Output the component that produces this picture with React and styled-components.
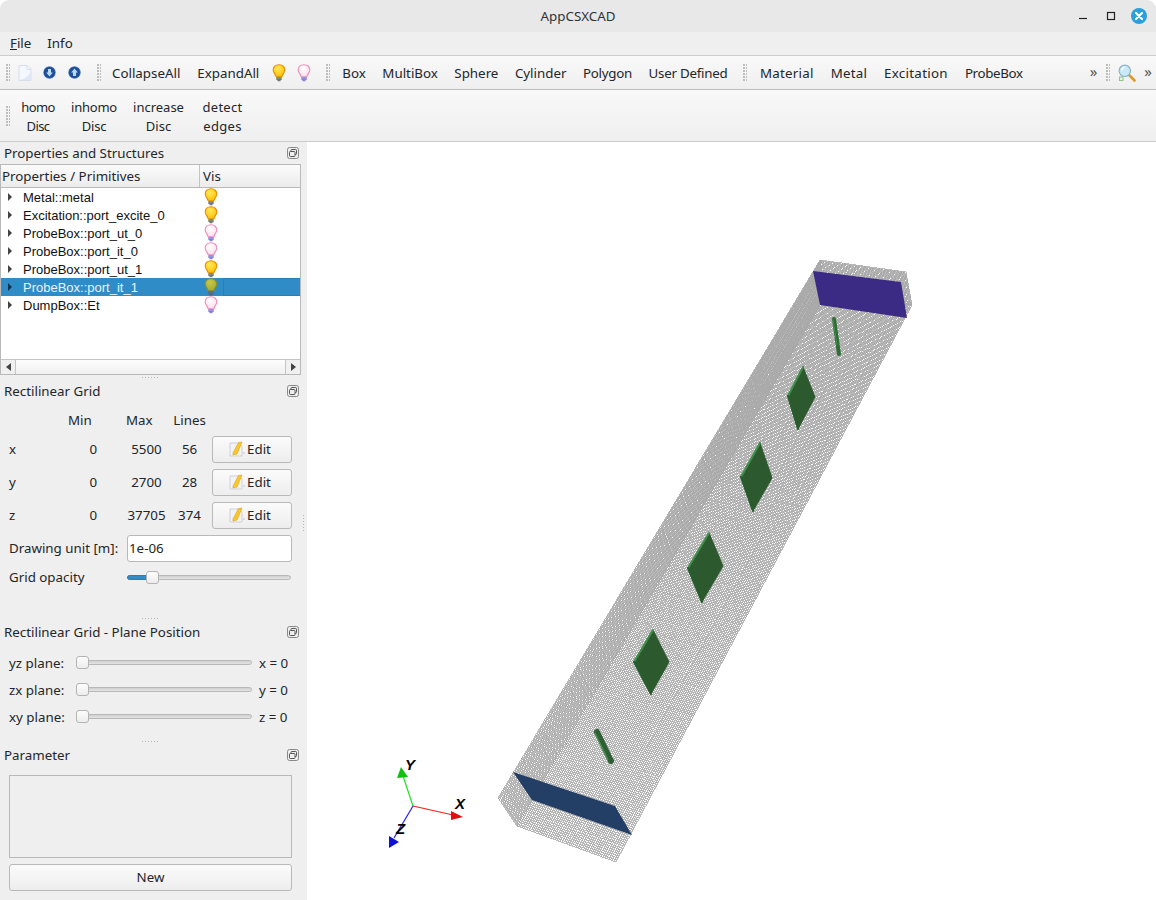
import React from "react";
import styled, { createGlobalStyle } from "styled-components";

const Global = createGlobalStyle`
  html, body { margin: 0; padding: 0; background: #fff; }
  body { width: 1156px; height: 900px; overflow: hidden; font-family: "Noto Sans", sans-serif; font-size: 13.33px; color: #232629; }
  * { box-sizing: border-box; }
`;

const Window = styled.div`display:flex;flex-direction:column;width:1156px;height:900px;`;
const TitleBar = styled.header`
  height:32px;flex:none;display:flex;align-items:center;justify-content:center;position:relative;
  background:#e8e8e8;border-radius:9px 9px 0 0;color:#2e3436;
`;
const WindowControls = styled.div`position:absolute;right:8px;top:0;height:32px;display:flex;align-items:center;gap:14px;`;
const MinIcon = styled.svg`margin-right:4px;`;
const MenuBar = styled.nav`height:24px;flex:none;display:flex;align-items:center;gap:16px;padding:0 10px 2px;background:#efefef;border-bottom:1px solid #cdcdcd;`;
const Mnemonic = styled.span`text-decoration:underline;`;
const ToolBar = styled.div`
  flex:none;display:flex;align-items:center;height:${p=>p.$h}px;padding-left:6px;
  background:linear-gradient(#f9f9f9,#efefef);border-bottom:1px solid ${p=>p.$line};
`;
const Grip = styled.i`
  flex:none;display:block;width:4px;height:${p=>p.$h||18}px;margin:${p=>p.$m||"0 6.5px 0 0"};
  background-image:radial-gradient(circle at 1px 1px,#bdbdbd .8px,transparent 1px);background-size:3px 3px;
`;
const ToolGroup = styled.div`display:flex;align-items:center;gap:${p=>p.$gap||17}px;margin-left:${p=>p.$ml||0}px;`;
const IconSlot = styled.span`display:flex;align-items:center;justify-content:center;width:16px;height:20px;flex:none;`;
const ToolText = styled.span`white-space:nowrap;letter-spacing:${p=>p.$ls||0}px;`;
const Stacked = styled.span`
  display:flex;flex-direction:column;align-items:center;line-height:19px;width:${p=>p.$w}px;padding-top:2px;
  font-size:13px;letter-spacing:${p=>p.$ls}px;white-space:nowrap;
`;
const Overflow = styled.span`font-size:15px;color:#555;line-height:1;margin:-3px ${p=>p.$mr||0}px 0 ${p=>p.$ml||0}px;`;
const RightTools = styled.div`margin-left:auto;display:flex;align-items:center;`;

const Main = styled.main`flex:1;display:flex;min-height:0;`;
const Dock = styled.aside`width:307px;flex:none;background:#efefef;display:flex;flex-direction:column;position:relative;`;
const DockTitle = styled.div`height:22px;flex:none;display:flex;align-items:center;justify-content:space-between;padding:0 8px 0 4px;`;
const Splitter = styled.div`
  height:5px;flex:none;display:flex;justify-content:center;align-items:center;padding-right:6px;
  &::after{content:"";width:17px;height:1px;background-image:radial-gradient(circle at .5px .5px,#b5b5b5 .7px,transparent .8px);background-size:3px 1px;}
`;
const VSplit = styled.i`
  position:absolute;left:303px;top:373px;width:1px;height:17px;
  background-image:radial-gradient(circle at .5px .5px,#b5b5b5 .7px,transparent .8px);background-size:1px 3px;
`;
const Tree = styled.div`width:301px;height:211px;flex:none;border:1px solid #b9b9b9;background:#fff;display:flex;flex-direction:column;`;
const TreeHead = styled.div`height:23px;flex:none;display:grid;grid-template-columns:198px 1fr;background:linear-gradient(#fbfbfb,#ececec);border-bottom:1px solid #b9b9b9;`;
const HeadCell = styled.div`display:flex;align-items:center;padding-left:${p=>p.$pl}px;& + &{border-left:1px solid #c4c4c4;}`;
const TreeBody = styled.div`flex:1;min-height:0;`;
const TreeRow = styled.div`
  height:18px;display:grid;grid-template-columns:22px 176px 24px 1fr;align-items:center;
  font-family:"Liberation Sans",sans-serif;font-size:13px;
  color:${p=>p.$sel?"#e8f3fa":"#111"};background:${p=>p.$sel?"#308cc6":"transparent"};
`;
const Arrow = styled.i`
  display:block;width:0;height:0;margin-left:7px;border-left:4px solid ${p=>p.$sel?"#10344d":"#444"};
  border-top:4px solid transparent;border-bottom:4px solid transparent;
`;
const BulbCell = styled.span`display:flex;justify-content:center;height:18px;align-items:center;margin-left:-1px;`;
const FocusCell = styled.span`height:18px;border:1px solid ${p=>p.$sel?"#2a7eb3":"transparent"};border-right:0;`;
const HScroll = styled.div`height:15px;flex:none;display:grid;grid-template-columns:15px 1fr 15px;border-top:1px solid #c4c4c4;background:#f2f2f2;`;
const ScrollBtn = styled.span`
  display:flex;align-items:center;justify-content:center;background:#f0f0f0;
  ${p=>p.$left?"border-right:1px solid #c4c4c4;":"border-left:1px solid #c4c4c4;"}
  &::after{content:"";${p=>p.$left?"border-right":"border-left"}:5px solid #444;border-top:4px solid transparent;border-bottom:4px solid transparent;}
`;
const ScrollThumb = styled.span`background:linear-gradient(#fdfdfd,#f0f0f0);`;

const GridPanel = styled.section`
  flex:none;display:grid;grid-template-columns:59px 30px 69px 45px 80px;grid-template-rows:20px 27px 27px 27px 27px 18px;row-gap:6px;
  align-items:center;padding:8px 0 0 9px;height:214px;
`;
const ColHead = styled.span`line-height:20px;padding-left:${p=>p.$pl||0}px;text-align:${p=>p.$align||"left"};`;
const Value = styled.span`text-align:${p=>p.$align||"center"};padding:0 ${p=>p.$pr||0}px 2px ${p=>p.$pl||0}px;`;
const Btn = styled.button`
  font:inherit;color:#232629;display:flex;align-items:center;justify-content:center;gap:${p=>p.$gap||0}px;
  height:27px;width:100%;padding:0 ${p=>p.$pr||0}px 1px 0;border:1px solid #b9b9b9;border-radius:3px;
  background:linear-gradient(#fbfbfb,#ededed);
`;
const UnitRow = styled.div`grid-column:1 / -1;display:flex;align-items:center;justify-content:space-between;height:27px;`;
const UnitLabel = styled.span`padding-bottom:2px;`;
const UnitInput = styled.div`width:165px;height:27px;border:1px solid #b9b9b9;border-radius:3px;background:#fff;display:flex;align-items:center;padding:0 0 2px 1px;`;
const OpacityRow = styled.div`grid-column:1 / -1;display:flex;align-items:center;justify-content:space-between;height:18px;padding-right:1px;`;
const Track = styled.div`
  position:relative;height:5px;width:${p=>p.$w}px;flex:none;border:1px solid #b9b9b9;border-radius:3px;background:linear-gradient(#cfcfcf,#e4e4e4);
`;
const TrackFill = styled.i`position:absolute;left:-1px;top:-1px;height:5px;border-radius:3px 0 0 3px;background:#308cc6;border:1px solid #2a7eb3;width:${p=>p.$w}px;`;
const Handle = styled.i`
  position:absolute;top:-5px;left:${p=>p.$x}px;width:13px;height:13px;border:1px solid #b4b4b4;border-radius:3px;background:linear-gradient(#fdfdfd,#ececec);
`;
const PlanePanel = styled.section`padding:6px 0 9px 9px;display:flex;flex-direction:column;flex:none;`;
const PlaneRow = styled.div`height:27px;display:flex;align-items:center;`;
const PlaneLabel = styled.span`width:67px;flex:none;`;
const PlaneVal = styled.span`margin-left:7px;`;
const ParamPanel = styled.section`padding:9px 15px 0 9px;display:flex;flex-direction:column;gap:6px;flex:none;`;
const ParamBox = styled.div`height:83px;border:1px solid #b9b9b9;background:#efefef;`;
const Viewport = styled.div`flex:1;background:#fff;min-width:0;`;
const Scene = styled.svg`display:block;width:849px;height:758px;`;
const AxisText = styled.text`font:italic 700 15px "Liberation Sans",sans-serif;fill:#000;`;

const Bulb = ({ kind }) => {
  const c = {
    on: ["#ffe95a", "#ffbe00", "#e98c00", "#777", "#999"],
    off: ["#ffffff", "#ffdcea", "#ea8fba", "#8484de", "#a6a6ea"],
    sel: ["#c6c94a", "#a3a72e", "#8b8f2a", "#56677a", "#6c7d90"],
  }[kind];
  const id = "bulb-" + kind;
  return (
    <svg width="16" height="18" viewBox="0 0 16 18">
      <defs>
        <radialGradient id={id} cx=".42" cy=".32" r=".72">
          <stop offset="0" stopColor={c[0]} />
          <stop offset="1" stopColor={c[1]} />
        </radialGradient>
      </defs>
      <path d="M8 .7C4.500.7 2.200 3 2.200 6c0 2.800 2.400 3.900 3 6.800h5.600c.6-2.900 3-4 3-6.800C13.800 3 11.500.7 8 .7Z" fill={`url(#${id})`} stroke={c[2]} strokeWidth="1.100" />
      <rect x="5.300" y="13" width="5.400" height="3.200" rx=".8" fill={c[3]} />
      <rect x="5.800" y="13.600" width="4.400" height=".9" fill={c[4]} />
      <rect x="6.500" y="16" width="3" height="1.300" rx=".6" fill={c[3]} />
    </svg>
  );
};

const PageIcon = () => (
  <svg width="14" height="16" viewBox="0 0 14 16">
    <path d="M1 .5h8l4 4v11H1Z" fill="#f4f7fd" stroke="#d7deea" />
    <path d="M9 .5v4h4Z" fill="#fff" stroke="#d7deea" />
    <path d="M2 15h11V6c-2 5-6 8-11 9Z" fill="#dfe6f5" />
  </svg>
);
const DiscIcon = ({ up }) => (
  <svg width="13" height="13" viewBox="0 0 13 13">
    <defs>
      <radialGradient id={up ? "du" : "dd"} cx=".5" cy=".5" r=".6">
        <stop offset="0" stopColor="#2b62b0" />
        <stop offset=".65" stopColor="#1b4a96" />
        <stop offset="1" stopColor="#86aedd" />
      </radialGradient>
    </defs>
    <circle cx="6.500" cy="6.500" r="6.200" fill={`url(#${up ? "du" : "dd"})`} />
    <path d={up ? "M6.500 2.500 9.800 6.500H8v3.500H5V6.500H3.200Z" : "M6.500 10.500 9.800 6.500H8V3H5v3.500H3.200Z"} fill="#b9d8f5" />
  </svg>
);
const EditIcon = () => (
  <svg width="17" height="16" viewBox="0 0 17 16">
    <path d="M1 2h9l3 3v10H1Z" fill="#f3f3f6" stroke="#cfcfda" />
    <path d="M4 12 9.500 1.500 13 1 8 13l-4 1Z" fill="#f7c92c" stroke="#e69a10" strokeWidth=".6" />
    <path d="M13 11h3v2h-3Z" fill="#dddde5" />
  </svg>
);
const FloatIcon = () => (
  <svg width="12" height="12" viewBox="0 0 12 12" fill="none" stroke="#555" strokeWidth="1">
    <rect x=".5" y=".5" width="11" height="11" rx="2" stroke="#888" />
    <rect x="4" y="2.500" width="5.500" height="5" rx=".8" />
    <rect x="2.500" y="4.500" width="5.500" height="5" rx=".8" fill="#efefef" />
  </svg>
);
const Magnifier = () => (
  <svg width="18" height="18" viewBox="0 0 18 18">
    <rect x="1.500" y="13" width="3.500" height="3.500" fill="#e5f3e2" stroke="#8fc48a" />
    <path d="m10.500 10.500 6 6" stroke="#dd9a2c" strokeWidth="2.600" strokeLinecap="round" />
    <circle cx="6.800" cy="6.800" r="5.700" fill="#c8e9f8" stroke="#8ab3c8" strokeWidth="1.200" />
    <path d="M3.500 6.500c.3-2 1.600-3 3.500-3.200" stroke="#fff" strokeWidth="1.200" fill="none" />
  </svg>
);

const quadMap = ([a, b, c, d]) => {
  const [x0, y0] = a, [x1, y1] = b, [x2, y2] = c, [x3, y3] = d;
  const dx1 = x1 - x2, dx2 = x3 - x2, sx = x0 - x1 + x2 - x3;
  const dy1 = y1 - y2, dy2 = y3 - y2, sy = y0 - y1 + y2 - y3;
  const den = dx1 * dy2 - dx2 * dy1;
  const g = (sx * dy2 - dx2 * sy) / den, h = (dx1 * sy - sx * dy1) / den;
  const A = x1 - x0 + g * x1, B = x3 - x0 + h * x3, D = y1 - y0 + g * y1, E = y3 - y0 + h * y3;
  return (u, v) => {
    const w = g * u + h * v + 1;
    return [(A * u + B * v + x0) / w, (D * u + E * v + y0) / w];
  };
};
const mesh = (q, nu, nv) => {
  const f = quadMap(q);
  let s = "";
  const seg = (p, r) => { s += `M${p[0].toFixed(1)} ${p[1].toFixed(1)}L${r[0].toFixed(1)} ${r[1].toFixed(1)}`; };
  for (let i = 0; i <= nu; i++) seg(f(i / nu, 0), f(i / nu, 1));
  for (let j = 0; j <= nv; j++) seg(f(0, j / nv), f(1, j / nv));
  return s;
};
const E1 = [[498, 798], [820, 260]], E2 = [[517, 826], [826, 295]], E3 = [[616, 862], [912, 305]], E4 = [[598, 833], [906, 272]];
const meshFloor = mesh([E2[0], E3[0], E3[1], E2[1]], 56, 374);
const meshWall = mesh([E1[0], E2[0], E2[1], E1[1]], 28, 374);
const meshTop = mesh([E1[1], E4[1], E3[1], E2[1]], 56, 28);

const patches = [
  [[803, 367], [815, 397], [798, 429], [788, 396]],
  [[760, 443], [772, 478], [753, 511], [741, 477]],
  [[709, 533], [723, 566], [702, 602], [688, 568]],
  [[653, 630], [669, 662], [651, 694], [634, 662]],
];
const pts = a => a.map(p => p.join(",")).join(" ");

const Scene3D = () => (
  <Scene viewBox="307 142 849 758">
    <g fill="none" shapeRendering="crispEdges">
      <path d={meshTop} stroke="#a4a4a4" strokeWidth=".75" />
      <path d={meshWall} stroke="#a4a4a4" strokeWidth=".74" />
      <path d={meshFloor} stroke="#a4a4a4" strokeWidth=".75" />
    </g>
    <polygon points="813,271 901,282 907,318 820,305" fill="#3c2b84" />
    <polygon points="513,772 615,806 632,835 532,800" fill="#243f66" />
    <line x1="834" y1="319" x2="839" y2="354" stroke="#2e6d35" strokeWidth="4" strokeLinecap="round" />
    <line x1="833" y1="319" x2="837" y2="345" stroke="#3f8f47" strokeWidth="1" />
    <line x1="597" y1="732" x2="611" y2="761" stroke="#2f5f34" strokeWidth="6" strokeLinecap="round" />
    <line x1="595" y1="733" x2="608" y2="760" stroke="#4a8f52" strokeWidth="1.500" />
    {patches.map((p, i) => (
      <g key={i}>
        <polygon points={pts(p)} fill="#2c5a2e" stroke="#2c5a2e" strokeLinejoin="round" />
        <polyline points={pts([p[3], p[0]])} stroke="#3f9049" strokeWidth="2" fill="none" strokeLinecap="round" />
        <polyline points={pts([p[3], p[2]])} stroke="#275f2c" strokeWidth="2" fill="none" strokeLinecap="round" />
      </g>
    ))}
    <line x1="413" y1="806" x2="453" y2="815" stroke="#ef2020" strokeWidth="1.200" />
    <line x1="413" y1="806" x2="403" y2="776" stroke="#22dd22" strokeWidth="1.200" />
    <line x1="413" y1="806" x2="394" y2="838" stroke="#2222ee" strokeWidth="1.200" />
    <polygon points="463,817 451,811 451,820" fill="#e01010" />
    <polygon points="401,767 397,778 408,777" fill="#12c012" />
    <polygon points="389,848 389,836 399,842" fill="#1010d8" />
    <AxisText x="455" y="809">X</AxisText>
    <AxisText x="405" y="770">Y</AxisText>
    <AxisText x="396" y="834">Z</AxisText>
  </Scene>
);

const items = [
  ["Metal::metal", "on"],
  ["Excitation::port_excite_0", "on"],
  ["ProbeBox::port_ut_0", "off"],
  ["ProbeBox::port_it_0", "off"],
  ["ProbeBox::port_ut_1", "on"],
  ["ProbeBox::port_it_1", "sel", true],
  ["DumpBox::Et", "off"],
];
const axes = [["x", "5500", "56"], ["y", "2700", "28"], ["z", "37705", "374"]];
const planes = [["yz plane:", "x = 0"], ["zx plane:", "y = 0"], ["xy plane:", "z = 0"]];
const shapes = [["Box"], ["MultiBox"], ["Sphere"], ["Cylinder"], ["Polygon", -0.25], ["User Defined", -0.25]];
const props = [["Material", 0.25], ["Metal", 0.2], ["Excitation", 0.3], ["ProbeBox", -0.35]];
const discs = [[34, -0.6, "homo", "Disc"], [44, -0.25, "inhomo", "Disc"], [51, 0, "increase", "Disc"], [43, 0.3, "detect", "edges"]];

const Title = ({ children }) => <DockTitle><span>{children}</span><FloatIcon /></DockTitle>;

export default function App() {
  return (
    <Window>
      <Global />
      <TitleBar>
        AppCSXCAD
        <WindowControls>
          <MinIcon width="10" height="8" viewBox="0 0 10 8"><path d="M1 6.500h8" stroke="#222" strokeWidth="1.200" /></MinIcon>
          <svg width="10" height="10" viewBox="0 0 10 10"><rect x="1.500" y="1.500" width="7" height="7" fill="none" stroke="#222" strokeWidth="1.200" /></svg>
          <svg width="18" height="18" viewBox="0 0 18 18">
            <circle cx="9" cy="9" r="8" fill="#2a9fde" />
            <path d="m6 6 6 6M12 6l-6 6" stroke="#fff" strokeWidth="2.200" strokeLinecap="round" />
          </svg>
        </WindowControls>
      </TitleBar>
      <MenuBar>
        <span><Mnemonic>F</Mnemonic>ile</span>
        <span>Info</span>
      </MenuBar>
      <ToolBar $h={34} $line="#bcbcbc">
        <Grip />
        <ToolGroup $gap={9}>
          <IconSlot><PageIcon /></IconSlot>
          <IconSlot><DiscIcon /></IconSlot>
          <IconSlot><DiscIcon up /></IconSlot>
        </ToolGroup>
        <Grip $m="0 11px 0 14.5px" />
        <ToolGroup>
          <ToolText>CollapseAll</ToolText>
          <ToolText>ExpandAll</ToolText>
        </ToolGroup>
        <ToolGroup $gap={9} $ml={12}>
          <IconSlot><Bulb kind="on" /></IconSlot>
          <IconSlot><Bulb kind="off" /></IconSlot>
        </ToolGroup>
        <Grip $m="0 12px 0 14px" />
        <ToolGroup $gap={16.5}>
          {shapes.map(([t, ls]) => <ToolText key={t} $ls={ls}>{t}</ToolText>)}
        </ToolGroup>
        <Grip $m="0 12.5px 0 16px" />
        <ToolGroup>
          {props.map(([t, ls]) => <ToolText key={t} $ls={ls}>{t}</ToolText>)}
        </ToolGroup>
        <RightTools>
          <Overflow>»</Overflow>
          <Grip $m="0 8px 0 9px" />
          <Magnifier />
          <Overflow $ml={8} $mr={4}>»</Overflow>
        </RightTools>
      </ToolBar>
      <ToolBar $h={52} $line="#cbcbcb">
        <Grip $h={20} $m="0 11px 0 0" />
        <ToolGroup>
          {discs.map(([w, ls, a, b]) => (
            <Stacked key={a} $w={w} $ls={ls}><span>{a}</span><span>{b}</span></Stacked>
          ))}
        </ToolGroup>
      </ToolBar>
      <Main>
        <Dock>
          <VSplit />
          <Title>Properties and Structures</Title>
          <Tree>
            <TreeHead>
              <HeadCell $pl={1}>Properties / Primitives</HeadCell>
              <HeadCell $pl={3}>Vis</HeadCell>
            </TreeHead>
            <TreeBody>
              {items.map(([name, kind, sel]) => (
                <TreeRow key={name} $sel={sel}>
                  <Arrow $sel={sel} />
                  <span>{name}</span>
                  <BulbCell><Bulb kind={kind} /></BulbCell>
                  <FocusCell $sel={sel} />
                </TreeRow>
              ))}
            </TreeBody>
            <HScroll>
              <ScrollBtn $left />
              <ScrollThumb />
              <ScrollBtn />
            </HScroll>
          </Tree>
          <Splitter />
          <Title>Rectilinear Grid</Title>
          <GridPanel>
            <span />
            <ColHead>Min</ColHead>
            <ColHead $pl={28}>Max</ColHead>
            <ColHead $align="center">Lines</ColHead>
            <span />
            {axes.map(([a, max, n]) => (
              <React.Fragment key={a}>
                <Value $align="left">{a}</Value>
                <Value $align="right" $pr={1}>0</Value>
                <Value $pl={28}>{max}</Value>
                <Value>{n}</Value>
                <Btn $gap={1} $pr={4}><EditIcon />Edit</Btn>
              </React.Fragment>
            ))}
            <UnitRow>
              <UnitLabel>Drawing unit [m]:</UnitLabel>
              <UnitInput>1e-06</UnitInput>
            </UnitRow>
            <OpacityRow>
              <span>Grid opacity</span>
              <Track $w={164}>
                <TrackFill $w={20} />
                <Handle $x={18} />
              </Track>
            </OpacityRow>
          </GridPanel>
          <Splitter />
          <Title>Rectilinear Grid - Plane Position</Title>
          <PlanePanel>
            {planes.map(([l, v]) => (
              <PlaneRow key={l}>
                <PlaneLabel>{l}</PlaneLabel>
                <Track $w={176}><Handle $x={-1} /></Track>
                <PlaneVal>{v}</PlaneVal>
              </PlaneRow>
            ))}
          </PlanePanel>
          <Splitter />
          <Title>Parameter</Title>
          <ParamPanel>
            <ParamBox />
            <Btn>New</Btn>
          </ParamPanel>
        </Dock>
        <Viewport><Scene3D /></Viewport>
      </Main>
    </Window>
  );
}
